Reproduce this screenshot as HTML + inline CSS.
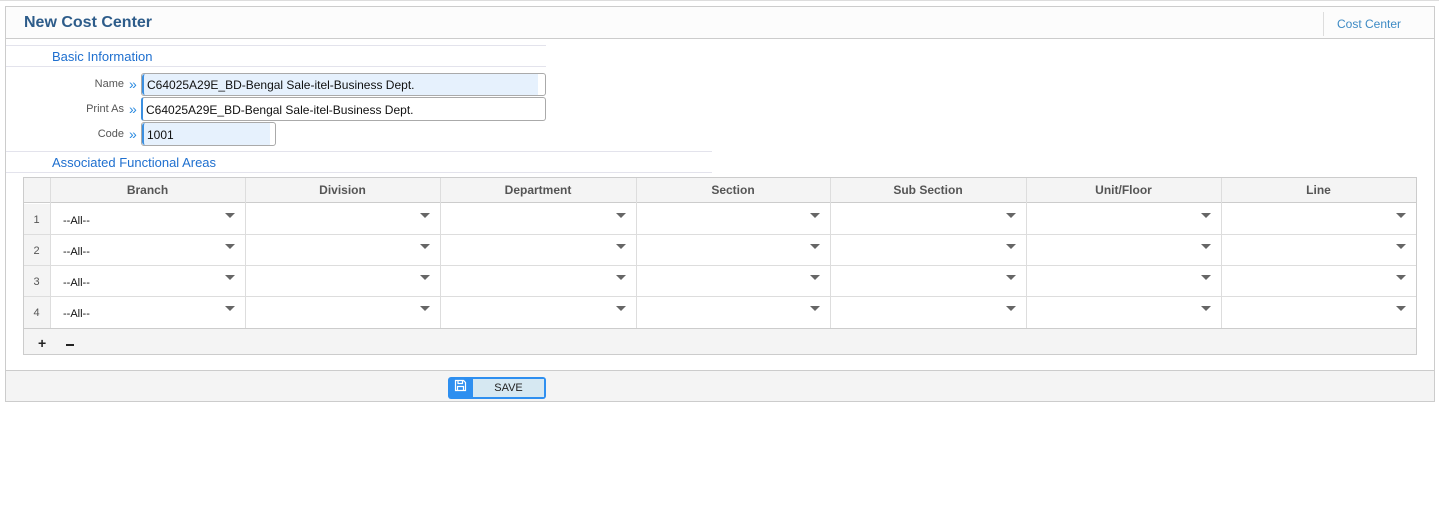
<!DOCTYPE html>
<html><head><meta charset="utf-8"><style>
*{box-sizing:border-box;margin:0;padding:0}
body{width:1439px;height:523px;background:#fff;font-family:"Liberation Sans",sans-serif;position:relative;overflow:hidden}
.a{position:absolute}
.lbl{font-size:11px;color:#555;text-align:right;width:80px;left:44px}
.chev{color:#2a8ae0;font-size:14px;left:129px;letter-spacing:-1px;line-height:14px}
.inp{border:1px solid #aaa;border-radius:3px;font-size:12px;padding-left:5px;color:#111;background:#fff}
.inp span{position:absolute;left:0;top:0;bottom:0;background:#e6f1fd;border-left:2px solid #3b8fe0;border-radius:3px 0 0 3px}
.hd{font-size:12px;font-weight:bold;color:#555;text-align:center;top:183px}
.vl{width:1px;background:#ddd}
.hl{height:1px;background:#ddd}
.tri{width:0;height:0;border-left:5px solid transparent;border-right:5px solid transparent;border-top:5px solid #666}
.rn{font-size:11px;color:#555;left:23px;width:27px;text-align:center}
.all{font-size:11px;color:#111;left:63px}
</style></head><body>
<div class="a" style="left:0;top:0;width:1439px;height:1px;background:#ddd"></div>
<div class="a" style="left:5px;top:6px;width:1430px;height:396px;border:1px solid #ccc"></div>
<div class="a" style="left:6px;top:7px;width:1428px;height:32px;background:#fcfcfc;border-bottom:1px solid #ccc"></div>
<div class="a" style="left:24px;top:14px;font-size:16px;font-weight:bold;color:#2d5c8a">New Cost Center</div>
<div class="a" style="left:1323px;top:12px;width:1px;height:24px;background:#ddd"></div>
<div class="a" style="left:1337px;top:17px;font-size:12px;color:#3d8ac4">Cost Center</div>

<div class="a" style="left:6px;top:45px;width:540px;height:1px;background:#e3e3ec"></div>
<div class="a" style="left:52px;top:49px;font-size:13px;color:#1e6fcf">Basic Information</div>
<div class="a" style="left:6px;top:66px;width:540px;height:1px;background:#e3e3ec"></div>

<div class="a lbl" style="top:78px">Name</div><div class="a chev" style="top:77px">»</div>
<div class="a inp" style="left:141px;top:73px;width:405px;height:23px"><span style="width:396px"></span><div class="a" style="left:5px;top:4px">C64025A29E_BD-Bengal Sale-itel-Business Dept.</div></div>
<div class="a lbl" style="top:103px">Print As</div><div class="a chev" style="top:102px">»</div>
<div class="a inp" style="left:141px;top:97px;width:405px;height:24px;border-left:2px solid #3b8fe0"><div class="a" style="left:3px;top:5px">C64025A29E_BD-Bengal Sale-itel-Business Dept.</div></div>
<div class="a lbl" style="top:128px">Code</div><div class="a chev" style="top:127px">»</div>
<div class="a inp" style="left:141px;top:122px;width:135px;height:24px"><span style="width:128px"></span><div class="a" style="left:5px;top:5px">1001</div></div>

<div class="a" style="left:6px;top:151px;width:706px;height:1px;background:#e3e3ec"></div>
<div class="a" style="left:52px;top:155px;font-size:13px;color:#1e6fcf">Associated Functional Areas</div>
<div class="a" style="left:6px;top:172px;width:706px;height:1px;background:#e3e3ec"></div>

<div class="a" style="left:23px;top:177px;width:1394px;height:178px;border:1px solid #ccc"></div>
<div class="a" style="left:24px;top:178px;width:1392px;height:25px;background:#f4f4f4;border-bottom:1px solid #ccc"></div>
<div class="a" style="left:24px;top:204px;width:26px;height:124px;background:#f4f4f4"></div>
<div class="a" style="left:24px;top:328px;width:1392px;height:26px;background:#f4f4f4;border-top:1px solid #ccc"></div>
<div class="a" style="left:38px;top:335px;font-size:14px;font-weight:bold;color:#222">+</div>
<div class="a" style="left:66px;top:344px;width:8px;height:2px;background:#222"></div>

<div class="a hd" style="left:50px;width:195px">Branch</div>
<div class="a hd" style="left:245px;width:195px">Division</div>
<div class="a hd" style="left:440px;width:196px">Department</div>
<div class="a hd" style="left:636px;width:194px">Section</div>
<div class="a hd" style="left:830px;width:196px">Sub Section</div>
<div class="a hd" style="left:1026px;width:195px">Unit/Floor</div>
<div class="a hd" style="left:1221px;width:195px">Line</div>

<div class="a vl" style="left:50px;top:178px;height:150px"></div>
<div class="a vl" style="left:245px;top:178px;height:150px"></div>
<div class="a vl" style="left:440px;top:178px;height:150px"></div>
<div class="a vl" style="left:636px;top:178px;height:150px"></div>
<div class="a vl" style="left:830px;top:178px;height:150px"></div>
<div class="a vl" style="left:1026px;top:178px;height:150px"></div>
<div class="a vl" style="left:1221px;top:178px;height:150px"></div>

<div class="a hl" style="left:24px;top:234px;width:1392px"></div>
<div class="a hl" style="left:24px;top:265px;width:1392px"></div>
<div class="a hl" style="left:24px;top:296px;width:1392px"></div>

<div class="a rn" style="top:214px">1</div><div class="a all" style="top:215px">--All--</div>
<div class="a rn" style="top:245px">2</div><div class="a all" style="top:246px">--All--</div>
<div class="a rn" style="top:276px">3</div><div class="a all" style="top:277px">--All--</div>
<div class="a rn" style="top:307px">4</div><div class="a all" style="top:308px">--All--</div>

<div id="tris"></div>
<script>
var xs=[245,440,636,830,1026,1221,1416],ys=[204,235,266,297],h='';
ys.forEach(function(y){xs.forEach(function(x){h+='<div class="a tri" style="left:'+(x-20)+'px;top:'+(y+9)+'px"></div>';});});
document.getElementById('tris').innerHTML=h;
</script>

<div class="a" style="left:6px;top:370px;width:1428px;height:31px;background:#f4f4f4;border-top:1px solid #ccc"></div>
<div class="a" style="left:448px;top:377px;width:98px;height:22px;background:#2e8ff0;border-radius:3px"></div>
<div class="a" style="left:473px;top:379px;width:71px;height:18px;background:#d6e8f2"></div>
<div class="a" style="left:473px;top:382px;width:71px;text-align:center;font-size:11px;color:#222">SAVE</div>
<svg class="a" style="left:454px;top:379px" width="13" height="13" viewBox="0 0 13 13"><path d="M1.5 1.5h8l2 2v8h-10z" fill="none" stroke="#fff" stroke-width="1.2"/><path d="M4 1.5v3h4.5v-3M3.5 11.5v-4h6v4" fill="none" stroke="#fff" stroke-width="1.2"/></svg>
</body></html>
